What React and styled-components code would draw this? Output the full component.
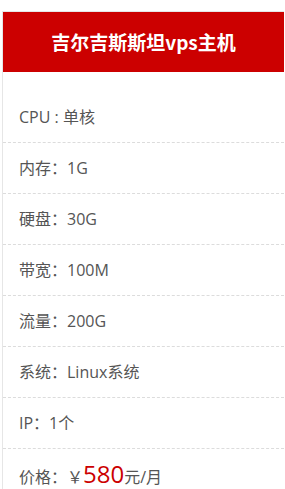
import React from 'react';
import styled, { createGlobalStyle } from 'styled-components';

const GlobalStyle = createGlobalStyle`
	body {
		margin: 0;
		background: #fff;
		font-family: "Open Sans", "Noto Sans CJK SC", sans-serif;
	}
`;

const Card = styled.div`
	margin: 11px 0 0 2px;
	width: 281px;
	border-left: 1px solid #e6e6e6;
	border-top: 1px solid #e6e6e6;
	background: #fff;
`;

const Header = styled.h3`
	margin: 0;
	height: 60px;
	line-height: 60px;
	background: #cc0000;
	color: #fff;
	font-family: "Microsoft YaHei", "Noto Sans CJK SC", sans-serif;
	font-size: 19px;
	font-weight: 700;
	text-align: center;
`;

const List = styled.ul`
	list-style: none;
	margin: 0;
	padding: 20px 0 0;
`;

const Row = styled.li`
	height: 50px;
	line-height: 50px;
	padding-left: 16px;
	border-bottom: 1px dashed #dcdcdc;
	color: #555;
	font-size: 16px;
	white-space: nowrap;
`;

const Price = styled.span`
	color: #cc0000;
	font-size: 24px;
`;

const specs = [
	'CPU : 单核',
	'内存：1G',
	'硬盘：30G',
	'带宽：100M',
	'流量：200G',
	'系统：Linux系统',
	'IP：1个',
];

const App = () => {
	return (
		<>
			<GlobalStyle />
			<Card>
				<Header>吉尔吉斯斯坦vps主机</Header>
				<List>
					{specs.map(spec =>
						<Row key={spec}>{spec}</Row>
					)}
					<Row>
						价格：￥<Price>580</Price>元/月
					</Row>
				</List>
			</Card>
		</>
	);
};

export default App;
